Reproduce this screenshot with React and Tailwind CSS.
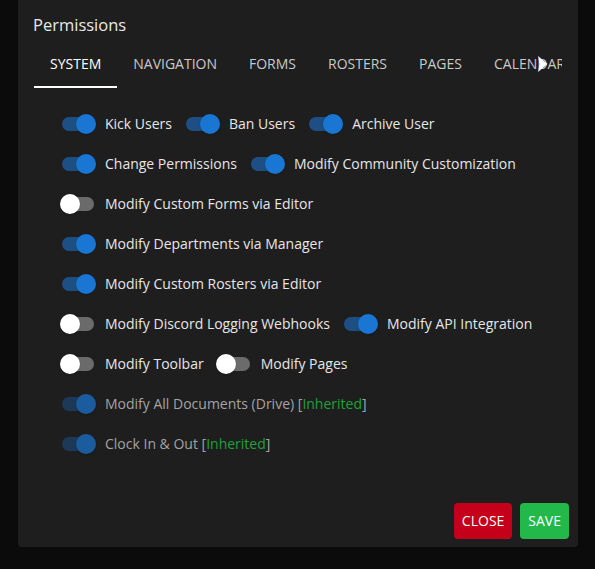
import { useState } from "react";

const rows = [
  [
    { label: "Kick Users", on: true },
    { label: "Ban Users", on: true },
    { label: "Archive User", on: true },
  ],
  [
    { label: "Change Permissions", on: true },
    { label: "Modify Community Customization", on: true },
  ],
  [{ label: "Modify Custom Forms via Editor", on: false }],
  [{ label: "Modify Departments via Manager", on: true }],
  [{ label: "Modify Custom Rosters via Editor", on: true }],
  [
    { label: "Modify Discord Logging Webhooks", on: false },
    { label: "Modify API Integration", on: true },
  ],
  [
    { label: "Modify Toolbar", on: false },
    { label: "Modify Pages", on: false },
  ],
  [{ label: "Modify All Documents (Drive)", on: true, inherited: true }],
  [{ label: "Clock In & Out", on: true, inherited: true }],
];

const tabs = ["System", "Navigation", "Forms", "Rosters", "Pages", "Calendar"];

function Toggle({ on, disabled }) {
  let track = "bg-[#6b6b6b]";
  let thumb = "left-0 bg-white";
  if (on && !disabled) {
    track = "bg-[#1d4f84]";
    thumb = "left-4 bg-[#1976d2]";
  } else if (on && disabled) {
    track = "bg-[#1c3957]";
    thumb = "left-4 bg-[#1b5c9e]";
  }
  return (
    <span className="relative w-9 h-5 shrink-0">
      <span className={`absolute left-[2px] top-[3px] w-8 h-3.5 rounded-full ${track}`} />
      <span className={`absolute top-0 w-5 h-5 rounded-full shadow ${thumb}`} />
    </span>
  );
}

export default function App() {
  const [perms, setPerms] = useState(rows);
  const [tab, setTab] = useState(0);

  const flip = (r, i) => {
    setPerms((p) =>
      p.map((row, ri) =>
        ri !== r
          ? row
          : row.map((it, ii) =>
              ii === i && !it.inherited ? { ...it, on: !it.on } : it,
            ),
      ),
    );
  };

  return (
    <div
      className="w-[595px] h-[569px] bg-[#0b0b0b] pl-[18px] pr-[17px] pb-[22px]"
      style={{ fontFamily: '"Open Sans", "Noto Sans", sans-serif' }}
    >
      <div className="h-full bg-[#1e1e1e] rounded-b flex flex-col">
        {/* TITLE */}
        <h2 className="pt-[13px] px-[15px] text-[16.5px] leading-6 text-[#e8e8e8]">
          Permissions
        </h2>

        {/* TABS */}
        <div className="relative mt-[3px] ml-4 mr-4 overflow-hidden">
          <div className="flex whitespace-nowrap">
            {tabs.map((t, i) => (
              <button
                key={t}
                onClick={() => setTab(i)}
                className={`relative h-12 px-4 text-sm uppercase shrink-0 ${
                  i === tab ? "text-white" : "text-[#c9c9c9]"
                }`}
              >
                {t}
                {i === tab && (
                  <span className="absolute left-0 right-0 bottom-0 h-[2px] bg-white" />
                )}
              </button>
            ))}
          </div>
          <svg
            viewBox="0 0 10 16"
            className="absolute left-[504px] top-4 w-[10px] h-4"
          >
            <path d="M0 0 L9.5 8 L0 16 L1.5 8 Z" fill="#fff" />
          </svg>
        </div>

        {/* SWITCHES */}
        <div className="mt-4 pl-[42px] flex flex-col">
          {perms.map((row, r) => (
            <div key={r} className="h-10 flex items-center gap-3">
              {row.map((it, i) => (
                <label
                  key={it.label}
                  onClick={() => flip(r, i)}
                  className="flex items-center gap-[9px] cursor-pointer"
                >
                  <Toggle on={it.on} disabled={it.inherited} />
                  <span
                    className={`text-sm ${
                      it.inherited ? "text-[#a3a3a3]" : "text-[#e6e6e6]"
                    }`}
                  >
                    {it.label}
                    {it.inherited && (
                      <>
                        {" "}[<span className="text-[#23a038]">Inherited</span>]
                      </>
                    )}
                  </span>
                </label>
              ))}
            </div>
          ))}
        </div>

        {/* ACTIONS */}
        <div className="mt-auto flex justify-end gap-2 pr-[9px] pb-2">
          <button className="h-9 px-2 rounded bg-[#c5001a] text-white text-sm font-medium uppercase">
            Close
          </button>
          <button className="h-9 px-2 rounded bg-[#22b84a] text-white text-sm font-medium uppercase">
            Save
          </button>
        </div>
      </div>
    </div>
  );
}
